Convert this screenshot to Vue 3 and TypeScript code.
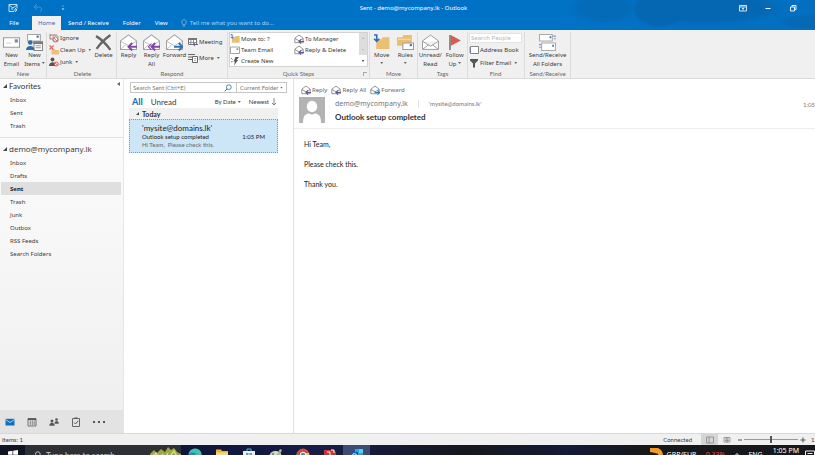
<script setup lang="ts">
import { ref } from 'vue'

interface QuickStep {
  icon: string
  label: string
}

const tabs: string[] = ['File', 'Home', 'Send / Receive', 'Folder', 'View']
const activeTab = ref<string>('Home')

const quickSteps: QuickStep[] = [
  { icon: 'move', label: 'Move to: ?' },
  { icon: 'reply-small', label: 'To Manager' },
  { icon: 'mail', label: 'Team Email' },
  { icon: 'reply-small', label: 'Reply & Delete' },
  { icon: 'bolt', label: 'Create New' },
]

const favorites: string[] = ['Inbox', 'Sent', 'Trash']
const folders: string[] = ['Inbox', 'Drafts', 'Sent', 'Trash', 'Junk', 'Outbox', 'RSS Feeds', 'Search Folders']
const activeFolder = ref<string>('Sent')

const modules: string[] = ['nav-mail', 'nav-calendar', 'nav-people', 'nav-tasks', 'nav-more']
const moduleNames: string[] = ['Mail', 'Calendar', 'People', 'Tasks', 'More']
const apps: string[] = ['edge', 'explorer', 'store', 'paint', 'chrome', 'red', 'outlook']

const peopleQuery = ref<string>('')
const mailQuery = ref<string>('')
const scope = ref<string>('Current Folder')
const zoom = ref<number>(50)
</script>

<template>
  <div class="window">
    <svg class="sprite" aria-hidden="true">
      <symbol id="outlook-app" viewBox="0 0 10 10">
        <path d="M1 1.500h8v4M1 1.500v7h5M1 2l4 3 4-3M3 6h2M7 5l2 2-2 2M9 7H5.500" fill="none" stroke="#d9ecfa" stroke-width=".9" />
      </symbol>
      <symbol id="undo" viewBox="0 0 10 10">
        <path d="M4 1L1 4l3 2.500M1.500 4H6c3 0 3 4 1 5" fill="none" stroke="#3d98dc" />
      </symbol>
      <symbol id="qat-more" viewBox="0 0 10 10">
        <path d="M4 3h2M4 5.500h2L5 7z" fill="#8cc4ee" stroke="#8cc4ee" stroke-width=".6" />
      </symbol>
      <symbol id="bulb" viewBox="0 0 8 10">
        <path d="M2.600 6.500C.2 4.500 1 1 4 1s3.800 3.500 1.400 5.500v1H2.600zM2.800 9h2.400" fill="none" stroke="#a8d2f2" stroke-width=".8" />
      </symbol>
      <symbol id="ribbon-options" viewBox="0 0 10 10">
        <path d="M1.500 2.500h7v5.500h-7zM1.500 4h7M5 7.500V5M3.900 6L5 4.900 6.100 6" fill="none" stroke="#e4f1fb" stroke-width=".9" />
      </symbol>
      <symbol id="minimize" viewBox="0 0 10 10"><path d="M2.500 5.500h5" stroke="#fff" /></symbol>
      <symbol id="restore" viewBox="0 0 10 10">
        <path d="M2.500 4h4v4h-4zM4 4V2.500h4v4H6.500" fill="none" stroke="#fff" stroke-width=".9" />
      </symbol>
      <symbol id="close" viewBox="0 0 10 10"><path d="M2 2l6 6M8 2L2 8" stroke="#fff" /></symbol>

      <symbol id="mail-large" viewBox="0 0 16 16">
        <path d="M.5 3.500h15v9H.5z" fill="#fff" stroke="#9b9b9b" />
        <path d="M11 5h3v3h-3z" fill="#7c8b9d" />
        <path d="M3 8.500h5" stroke="#cfd5db" />
      </symbol>
      <symbol id="new-items" viewBox="0 0 16 16">
        <path d="M1.500.5h12v6h-12z" fill="#fff" stroke="#a5a5a5" />
        <path d="M10 1.500h2v2h-2z" fill="#4d6d92" />
        <path d="M7.500 7.500h8v8h-8z" fill="#fff" stroke="#888" />
        <path d="M7 7h9v2.500H7z" fill="#7a7a7a" />
        <path d="M9 11h5M9 13h5" stroke="#999" />
        <circle cx="4" cy="8" r="2.200" fill="#2f6cab" />
        <path d="M0 15c0-5 8-5 8 0z" fill="#2f6cab" />
      </symbol>
      <symbol id="ignore" viewBox="0 0 10 10">
        <path d="M1 2h7M1 1v5h3" fill="none" stroke="#a66a66" stroke-width=".9" />
        <path d="M4 3h5v5H4z" fill="#fff" stroke="#999" stroke-width=".8" />
        <circle cx="6.500" cy="6.500" r="2.500" fill="none" stroke="#c8625a" stroke-width=".9" />
        <path d="M4.800 4.800l3.500 3.500" stroke="#c8625a" stroke-width=".8" />
      </symbol>
      <symbol id="clean" viewBox="0 0 10 10">
        <path d="M2.500 4h3l1 1H10v4.500H2.500z" fill="#ecc17a" />
        <path d="M.5.500l4 4M4.500.500l-4 4" stroke="#d8695c" stroke-width="1.100" />
      </symbol>
      <symbol id="junk" viewBox="0 0 10 10">
        <circle cx="3.500" cy="2.500" r="1.900" fill="#555" />
        <path d="M0 9c0-5 7-5 7 0z" fill="#555" />
        <circle cx="7.200" cy="7" r="2" fill="#fff" stroke="#c8483e" stroke-width=".9" />
        <path d="M5.800 5.600l2.800 2.800" stroke="#c8483e" stroke-width=".8" />
      </symbol>
      <symbol id="delete" viewBox="0 0 16 16">
        <path d="M1 2C6 5 11 10 14.500 15M14.500 1C9 5 5 9 1.500 14" fill="none" stroke="#666" stroke-width="2.200" />
      </symbol>
      <symbol id="reply" viewBox="0 0 16 16">
        <path d="M.5 6.500L8 .8l7.500 5.700v8H.5z" fill="#fff" stroke="#a2a2a2" />
        <path d="M.8 7L8 11l7.200-4M.8 14.300L5.500 10" fill="none" stroke="#b5b5b5" stroke-width=".8" />
        <path d="M8.500 12H16" stroke="#8146a4" stroke-width="1.800" />
        <path d="M11.500 8.500L8 12l3.500 3.500" fill="none" stroke="#8146a4" stroke-width="1.800" />
      </symbol>
      <symbol id="reply-all" viewBox="0 0 16 16">
        <path d="M.5 6.500L8 .8l7.500 5.700v8H.5z" fill="#fff" stroke="#a2a2a2" />
        <path d="M.8 7L8 11l7.200-4M.8 14.300L5 10" fill="none" stroke="#b5b5b5" stroke-width=".8" />
        <path d="M8.500 12H16M11.500 8.500L8 12l3.500 3.500" fill="none" stroke="#8146a4" stroke-width="1.800" />
        <path d="M8 9l-3 3 3 3" fill="none" stroke="#8146a4" />
      </symbol>
      <symbol id="forward" viewBox="0 0 16 16">
        <path d="M.5 6.500L8 .8l7.500 5.700v8H.5z" fill="#fff" stroke="#a2a2a2" />
        <path d="M.8 7L8 11l7.200-4M.8 14.300L5.500 10" fill="none" stroke="#b5b5b5" stroke-width=".8" />
        <path d="M7.500 12H15M12 8.500l3.500 3.500-3.500 3.500" fill="none" stroke="#2f74b8" stroke-width="1.800" />
      </symbol>
      <symbol id="meeting" viewBox="0 0 10 10">
        <path d="M.5 1.500h8v6h-8z" fill="#fff" stroke="#777" />
        <path d="M0 1h9v2H0zM2.500 3h.8v4.500h-.8zM5 3h.8v4.500H5zM1 5h7v.7H1z" fill="#777" />
        <path d="M5 7.500h5M7 5.800L5.300 7.500 7 9.200" fill="none" stroke="#7154a1" />
      </symbol>
      <symbol id="more" viewBox="0 0 10 10">
        <path d="M0 1.500h7M0 4h4M0 6.500h4" stroke="#666" />
        <path d="M4.500 3.500h5v6h-5z" fill="#fff" stroke="#666" />
        <path d="M6 5.500h2M6 7.500h2" stroke="#888" stroke-width=".7" />
      </symbol>
      <symbol id="move" viewBox="0 0 16 16">
        <path d="M3 5h5l1-2h6.500v11H3z" fill="#ebbf72" />
        <path d="M1 1h2.500v5M1 4.500L3.500 7 6 4.500" fill="none" stroke="#2f6cb4" stroke-width="1.500" />
      </symbol>
      <symbol id="rules" viewBox="0 0 16 16">
        <path d="M0 3h5l1-2h8v10H0z" fill="#ebbf72" />
        <path d="M5.500 8.500h10v6h-10z" fill="#fff" stroke="#9c9c9c" />
        <path d="M12 9.500h2v2h-2z" fill="#356ca8" />
        <path d="M1 5h12" stroke="#f7dfb2" />
      </symbol>
      <symbol id="mail" viewBox="0 0 10 10">
        <path d="M.5 2h9v6.500h-9z" fill="#fff" stroke="#999" stroke-width=".9" />
        <path d="M6.500 3.300h1.800V5H6.500z" fill="#888" />
      </symbol>
      <symbol id="reply-small" viewBox="0 0 10 10">
        <path d="M.8 4.200L5 1l4.200 3.200v4.500H.8zM1 4.500l4 2.400 4-2.400" fill="#fff" stroke="#888" stroke-width=".9" />
        <path d="M5 7.500h5M7 5.500l-2 2 2 2" fill="none" stroke="#5d5a9c" stroke-width="1.100" />
      </symbol>
      <symbol id="forward-small" viewBox="0 0 10 10">
        <path d="M.8 4.200L5 1l4.200 3.200v4.500H.8zM1 4.500l4 2.400 4-2.400" fill="#fff" stroke="#888" stroke-width=".9" />
        <path d="M4.500 7.500h5M7.500 5.500l2 2-2 2" fill="none" stroke="#2f80c2" stroke-width="1.100" />
      </symbol>
      <symbol id="bolt" viewBox="0 0 10 10">
        <path d="M5.500 1H9L6.500 4h1.600L4 9.500l1-4H3.500z" fill="#555" />
        <path d="M1 2l1.500 1.500M1 6l1.500-.5" stroke="#777" />
      </symbol>
      <symbol id="open-mail" viewBox="0 0 16 16">
        <path d="M.5 6.500L8 1l7.500 5.500v8H.5zM.8 7L8 11.500 15.200 7M.8 14.300L6 10.300M15.200 14.300L10 10.300" fill="#fff" stroke="#999" stroke-width=".9" />
      </symbol>
      <symbol id="flag" viewBox="0 0 16 16">
        <path d="M3 1h1.500v14H3z" fill="#777" />
        <path d="M4.500 1L14 6l-9.500 5z" fill="#d95d4e" />
      </symbol>
      <symbol id="book" viewBox="0 0 10 10">
        <path d="M1.500 1.500h8v7h-8z" fill="#fff" stroke="#777" stroke-width=".9" />
        <path d="M0 3h2M0 5h2M0 7h2" stroke="#5a7fa7" stroke-width=".8" />
      </symbol>
      <symbol id="filter" viewBox="0 0 10 10"><path d="M1 1h8v1.500L6 5.500v4H4v-4L1 2.500z" fill="#555" /></symbol>
      <symbol id="send-receive" viewBox="0 0 16 16">
        <path d="M.5.500h12v6H.5zM2.500 8.500h13v7h-13z" fill="#fff" stroke="#aaa" />
        <path d="M10 2h1.500v2H10zM12.500 10H14v2h-1.500z" fill="#3b6ca4" />
        <path d="M13 2h3M14 4.500h2M0 10h2M0 12.500h2" stroke="#7f9fc0" />
      </symbol>

      <symbol id="search" viewBox="0 0 10 10">
        <circle cx="6" cy="4" r="3" fill="none" stroke="currentColor" />
        <path d="M3.800 6.200L.8 9.200" stroke="currentColor" stroke-width="1.200" />
      </symbol>
      <symbol id="nav-mail" viewBox="0 0 10 10">
        <path d="M.5 1.800h9v6.700h-9z" fill="#0d6fbd" />
        <path d="M.5 2.500L5 5.500l4.500-3" fill="none" stroke="#d8e9f5" stroke-width=".8" />
      </symbol>
      <symbol id="nav-calendar" viewBox="0 0 10 10">
        <path d="M1 1.500h8v7.500H1z" fill="#f1f1f1" stroke="#555" stroke-width=".8" />
        <path d="M1 1.500h8v1.700H1z" fill="#555" />
        <path d="M1.500 5h7M1.500 7h7M3.500 3.500v5M5.500 3.500v5M7.300 3.500v5" stroke="#777" stroke-width=".6" />
      </symbol>
      <symbol id="nav-people" viewBox="0 0 10 10">
        <circle cx="3" cy="4" r="1.500" fill="#555" />
        <circle cx="7.500" cy="2.500" r="1.300" fill="#555" />
        <path d="M.3 8.800c0-4 5.400-4 5.400 0zM5.500 6.800c0-3.700 4.300-3.700 4.300 0z" fill="#555" />
      </symbol>
      <symbol id="nav-tasks" viewBox="0 0 10 10">
        <path d="M1.500 1.500h7v8h-7z" fill="none" stroke="#666" />
        <path d="M3.500.500h3V2h-3z" fill="#555" />
        <path d="M3 5.500L4.500 7l2.700-3.200" fill="none" stroke="#555" />
      </symbol>
      <symbol id="nav-more" viewBox="0 0 12 12">
        <path d="M0 5h2v2H0zM5 5h2v2H5zM10 5h2v2h-2z" fill="#555" />
      </symbol>

      <symbol id="windows" viewBox="0 0 10 10"><path d="M0 1.400L4.500.8v4H0zM5.200.7L10 0v4.800H5.200zM0 5.400h4.500v4L0 8.800zM5.200 5.400H10V10l-4.800-.7z" fill="#fff" /></symbol>
      <symbol id="plants" viewBox="0 0 32 18">
        <path d="M0 18L1 8l4-4 3 3 4-4 4 3 3-5 3 3 3-2 3 4 4 2v10z" fill="#9aa943" />
        <path d="M3 11l4-4 4 5M13 8l3 4 3-5M22 9l3-4 3 6" fill="none" stroke="#e1d27b" stroke-width="1.500" />
        <circle cx="15" cy="12" r="2.600" fill="#28a696" />
        <circle cx="23" cy="13" r="2.400" fill="#45681e" />
      </symbol>
      <symbol id="edge" viewBox="0 0 14 14">
        <circle cx="7" cy="7" r="6.500" fill="#188dd0" />
        <path d="M.6 6C2-1 13-1 13.400 6c.2 3-4 3-5 2 1-3-4-5-7.800-2z" fill="#42c4a2" />
      </symbol>
      <symbol id="explorer" viewBox="0 0 14 14">
        <path d="M1 1.500h5l1 1.500h6v9H1z" fill="#eab13c" /><path d="M1 4.500h12V12H1z" fill="#ffd867" />
      </symbol>
      <symbol id="store" viewBox="0 0 14 14">
        <path d="M5 3V1h4v2" fill="none" stroke="#4bb4e8" /><path d="M1 3h12v10H1z" fill="#e8f0f5" /><path d="M4 5h2.500v2.500H4z" fill="#4a9ed8" /><path d="M7.500 5H10v2.500H7.500z" fill="#6fae45" />
      </symbol>
      <symbol id="paint" viewBox="0 0 14 14">
        <ellipse cx="6.500" cy="8" rx="6" ry="5" fill="#d8ddcf" /><path d="M7 8l4-7 2 1-3 7z" fill="#a9bb83" /><circle cx="4" cy="6" r="1.300" fill="#65a65d" />
      </symbol>
      <symbol id="chrome" viewBox="0 0 14 14">
        <circle cx="7" cy="7" r="6.500" fill="#d9463c" /><path d="M1 4l6 9.500C0 13 0 8 1 4z" fill="#38a254" /><path d="M13 5c1 5-2 8-6 8.500L10 5z" fill="#f2c53a" /><circle cx="7" cy="7" r="2.800" fill="#4386e8" stroke="#fff" />
      </symbol>
      <symbol id="red" viewBox="0 0 14 14">
        <path d="M1 2h9l3 2v9H1z" fill="#cf332f" /><path d="M4 4h3v4M8 2h3v3" fill="none" stroke="#fff" />
      </symbol>
      <symbol id="outlook" viewBox="0 0 14 14">
        <path d="M5 1h8v12H5z" fill="#2aa3e5" /><path d="M1 4h7v7H1z" fill="#0a61ad" /><path d="M9 1h4v4H9z" fill="#58cff4" /><circle cx="4.500" cy="7.500" r="1.900" fill="none" stroke="#fff" />
      </symbol>
      <symbol id="market" viewBox="0 0 14 14">
        <path d="M0 0h8c5 2 6 7 4 13C9 13 8 9 8 6L5 5 0 4z" fill="#f49b23" />
      </symbol>
    </svg>

    <header class="top">
      <div class="titlebar">
        <div class="quick">
          <button aria-label="Outlook"><svg class="s10"><use href="#outlook-app" /></svg></button>
          <button aria-label="Undo"><svg class="s10"><use href="#undo" /></svg></button>
          <button aria-label="Customize toolbar"><svg class="s10"><use href="#qat-more" /></svg></button>
        </div>
        <h1>Sent - demo@mycompany.lk - Outlook</h1>
        <div class="controls">
          <button aria-label="Ribbon options"><svg class="s10"><use href="#ribbon-options" /></svg></button>
          <button aria-label="Minimize"><svg class="s10"><use href="#minimize" /></svg></button>
          <button aria-label="Restore"><svg class="s10"><use href="#restore" /></svg></button>
          <button aria-label="Close"><svg class="s10"><use href="#close" /></svg></button>
        </div>
      </div>
      <nav class="tabs">
        <button v-for="tab in tabs" :key="tab" :class="{ active: tab === activeTab }" @click="activeTab = tab">{{ tab }}</button>
        <label class="tell"><svg class="s8"><use href="#bulb" /></svg><input aria-label="Tell me" placeholder="Tell me what you want to do..." /></label>
      </nav>
    </header>

    <section class="ribbon">
      <div class="group g-new">
        <div class="tools">
          <button class="big"><svg class="s16"><use href="#mail-large" /></svg><span>New<br />Email</span></button>
          <button class="big"><svg class="s16"><use href="#new-items" /></svg><span>New<br />Items <i class="caret" /></span></button>
        </div>
        <h2>New</h2>
      </div>
      <div class="group g-delete">
        <div class="tools">
          <div class="stack">
            <button class="small"><svg class="s10"><use href="#ignore" /></svg>Ignore</button>
            <button class="small"><svg class="s10"><use href="#clean" /></svg>Clean Up <i class="caret" /></button>
            <button class="small"><svg class="s10"><use href="#junk" /></svg>Junk <i class="caret" /></button>
          </div>
          <button class="big"><svg class="s16"><use href="#delete" /></svg><span>Delete</span></button>
        </div>
        <h2>Delete</h2>
      </div>
      <div class="group g-respond">
        <div class="tools">
          <button class="big"><svg class="s16"><use href="#reply" /></svg><span>Reply</span></button>
          <button class="big"><svg class="s16"><use href="#reply-all" /></svg><span>Reply<br />All</span></button>
          <button class="big"><svg class="s16"><use href="#forward" /></svg><span>Forward</span></button>
          <div class="stack pair">
            <button class="small"><svg class="s10"><use href="#meeting" /></svg>Meeting</button>
            <button class="small"><svg class="s10"><use href="#more" /></svg>More <i class="caret" /></button>
          </div>
        </div>
        <h2>Respond</h2>
      </div>
      <div class="group g-steps">
        <div class="gallery">
          <div class="steps">
            <button v-for="step in quickSteps" :key="step.label" class="small"><svg class="s10"><use :href="'#' + step.icon" /></svg>{{ step.label }}</button>
          </div>
          <div class="scroller"><i class="up" /><i class="down" /><i class="expand" /></div>
        </div>
        <h2>Quick Steps<i class="launcher" /></h2>
      </div>
      <div class="group g-move">
        <div class="tools">
          <button class="big"><svg class="s16"><use href="#move" /></svg><span>Move<br /><i class="caret" /></span></button>
          <button class="big"><svg class="s16"><use href="#rules" /></svg><span>Rules<br /><i class="caret" /></span></button>
        </div>
        <h2>Move</h2>
      </div>
      <div class="group g-tags">
        <div class="tools">
          <button class="big"><svg class="s16"><use href="#open-mail" /></svg><span>Unread/<br />Read</span></button>
          <button class="big"><svg class="s16"><use href="#flag" /></svg><span>Follow<br />Up <i class="caret" /></span></button>
        </div>
        <h2>Tags</h2>
      </div>
      <div class="group g-find">
        <div class="stack">
          <input v-model="peopleQuery" class="people" aria-label="Search People" placeholder="Search People" />
          <button class="small"><svg class="s10"><use href="#book" /></svg>Address Book</button>
          <button class="small"><svg class="s10"><use href="#filter" /></svg>Filter Email <i class="caret" /></button>
        </div>
        <h2>Find</h2>
      </div>
      <div class="group g-send">
        <div class="tools">
          <button class="big"><svg class="s16"><use href="#send-receive" /></svg><span>Send/Receive<br />All Folders</span></button>
        </div>
        <h2>Send/Receive</h2>
      </div>
    </section>

    <div class="main">
      <aside class="sidebar">
        <section class="tree">
          <h3><i class="tri" />Favorites<i class="collapse" /></h3>
          <ul>
            <li v-for="name in favorites" :key="name"><button>{{ name }}</button></li>
          </ul>
        </section>
        <section class="tree account">
          <h3><i class="tri" />demo@mycompany.lk</h3>
          <ul>
            <li v-for="name in folders" :key="name">
              <button :class="{ active: name === activeFolder }" @click="activeFolder = name">{{ name }}</button>
            </li>
          </ul>
        </section>
        <div class="modules">
          <button v-for="(icon, i) in modules" :key="icon" :aria-label="moduleNames[i]"><svg :class="icon === 'nav-more' ? 's12' : 's10'"><use :href="'#' + icon" /></svg></button>
        </div>
      </aside>

      <section class="list">
        <div class="finder">
          <label class="query"><input v-model="mailQuery" aria-label="Search mail" placeholder="Search Sent (Ctrl+E)" /><svg class="s8"><use href="#search" /></svg></label>
          <label class="scope">
            <select v-model="scope" aria-label="Search scope"><option>Current Folder</option></select>
            <i class="caret" />
          </label>
        </div>
        <div class="filters">
          <button class="all">All</button>
          <button class="unread">Unread</button>
          <button class="sort">By Date <i class="caret" /></button>
          <button class="order">Newest <svg class="s8" viewBox="0 0 8 8"><path d="M4 0v7M2 5l2 2 2-2" fill="none" stroke="#666" stroke-width=".8" /></svg></button>
        </div>
        <h4><i class="tri" />Today</h4>
        <article class="message">
          <div class="sender">'mysite@domains.lk'</div>
          <div class="line"><span>Outlook setup completed</span><time>1:05 PM</time></div>
          <p>Hi Team,&nbsp; Please check this.</p>
        </article>
      </section>

      <article class="reading">
        <header class="mail-head">
          <div class="actions">
            <button><svg class="s10"><use href="#reply-small" /></svg>Reply</button>
            <button><svg class="s10"><use href="#reply-small" /></svg>Reply All</button>
            <button><svg class="s10"><use href="#forward-small" /></svg>Forward</button>
          </div>
          <div class="who">
            <svg class="avatar" viewBox="0 0 26 26">
              <path d="M0 0h26v26H0z" fill="#b3b3b3" />
              <ellipse cx="13" cy="9.500" rx="5.200" ry="5.700" fill="#fff" />
              <path d="M4 26c0-7 2-9 6-9.500 2 1.300 4 1.300 6 0 4 .5 6 2.500 6 9.500z" fill="#fff" />
            </svg>
            <div class="names">
              <div class="from"><span>demo@mycompany.lk</span><span class="to">'mysite@domains.lk'</span></div>
              <h2>Outlook setup completed</h2>
            </div>
            <time>1:05</time>
          </div>
        </header>
        <div class="body">
          <p>Hi Team,</p>
          <p>Please check this.</p>
          <p>Thank you.</p>
        </div>
      </article>
    </div>

    <footer class="status">
      <span>Items: 1</span>
      <span class="connected">Connected</span>
      <button class="view on" aria-label="Normal view"><svg class="s8" viewBox="0 0 8 8"><path d="M.5 1h7v6h-7zM3 1v6" fill="none" stroke="#888" stroke-width=".8" /></svg></button>
      <button class="view" aria-label="Reading view"><svg class="s8" viewBox="0 0 8 8"><path d="M1 1.500h6v4.500H1zM4 1.500V7M2 3h4M2 4.500h4" fill="none" stroke="#888" stroke-width=".8" /></svg></button>
      <button class="step" aria-label="Zoom out"><svg class="s8" viewBox="0 0 8 8"><path d="M2 4h4" stroke="#555" /></svg></button>
      <input v-model.number="zoom" type="range" min="0" max="100" aria-label="Zoom" />
      <button class="step" aria-label="Zoom in"><svg class="s8" viewBox="0 0 8 8"><path d="M1.500 4h5M4 1.500v5" stroke="#555" /></svg></button>
      <span class="percent">1</span>
    </footer>

    <footer class="taskbar">
      <div class="task-inner">
        <button class="start" aria-label="Start"><svg class="s10"><use href="#windows" /></svg></button>
        <label class="task-search">
          <svg class="s8"><use href="#search" /></svg>
          <input aria-label="Search Windows" placeholder="Type here to search" />
          <svg class="plants"><use href="#plants" /></svg>
        </label>
        <button v-for="app in apps" :key="app" class="app" :class="{ open: app === 'outlook' }" :aria-label="app"><svg class="s14"><use :href="'#' + app" /></svg></button>
        <div class="tray">
          <svg class="s14"><use href="#market" /></svg>
          <span class="pair-name">GBP/EUR</span>
          <span class="loss">-0.33%</span>
          <svg class="s8 chev" viewBox="0 0 8 8"><path d="M2 4.500l2-2 2 2" fill="none" stroke="#fff" /></svg>
          <span class="lang">ENG</span>
          <time>1:05 PM</time>
          <svg class="s10" viewBox="0 0 10 10"><path d="M.5 1h9v7H6L4.500 9.500V8h-4zM2.500 3.500h5M2.500 5.500h5" fill="none" stroke="#eee" /></svg>
        </div>
      </div>
    </footer>
  </div>
</template>

<style>
body {
  margin: 0;
  overflow: hidden;
}
</style>

<style scoped>
.window {
  display: flex;
  flex-direction: column;
  height: 100vh;
  overflow: hidden;
  font: 6px/8px 'Noto Sans', 'Open Sans', sans-serif;
  color: #3a3a3a;
  background: #fff;
}
.window * { box-sizing: border-box; }
.sprite { position: absolute; width: 0; height: 0; }
button, input, select {
  min-width: 0;
  margin: 0;
  padding: 0;
  border: 0;
  border-radius: 0;
  outline: 0;
  background: none;
  color: inherit;
  font: inherit;
}
h1, h2, h3, h4, p, ul { margin: 0; padding: 0; font: inherit; list-style: none; }
svg { display: block; flex: none; }
.s8 { width: 8px; height: 8px; }
.s10 { width: 10px; height: 10px; }
.s12 { width: 12px; height: 12px; }
.s14 { width: 14px; height: 14px; }
.s16 { width: 17px; height: 17px; }
button { display: flex; align-items: center; white-space: nowrap; }
.caret {
  display: inline-block;
  width: 3px;
  height: 2px;
  background: #666;
  clip-path: polygon(0 0, 100% 0, 50% 100%);
  vertical-align: middle;
}

.top {
  flex: none;
  color: #fff;
  background:
    radial-gradient(ellipse 34px 16px at calc(100% - 212px) 8px, #046bb9 70%, transparent),
    radial-gradient(ellipse 28px 18px at calc(100% - 155px) 10px, #0566b1 80%, transparent),
    radial-gradient(ellipse 80px 18px at calc(100% - 110px) 8px, #0567b2 70%, transparent),
    radial-gradient(ellipse 30px 8px at calc(100% - 6px) 22px, #0569b6 70%, transparent),
    linear-gradient(90deg, #0072c6 68%, #046fc0);
}
.titlebar { display: grid; grid-template-columns: 1fr auto 1fr; align-items: center; height: 16px; }
.titlebar h1 { padding-left: 12px; }
.quick { display: flex; gap: 15px; padding-left: 8px; }
.controls { display: flex; justify-content: flex-end; gap: 15px; margin-right: -8px; }
.tabs { display: flex; height: 14px; }
.tabs button { justify-content: center; padding: 0 7px; }
.tabs button:first-child { width: 32px; padding: 0 4px 0 0; }
.tabs .active { width: 29px; padding: 0; background: #f1f1f1; color: #1c6fb5; }
.tell { display: flex; align-items: center; gap: 2px; margin-left: 5px; }
.tell input { width: 120px; }
.tell input::placeholder { color: #a8d2f2; opacity: 1; }

.ribbon {
  display: flex;
  flex: none;
  height: 49px;
  padding-top: 2px;
  background: #f0f0f0;
  border-bottom: 1px solid #dadada;
}
.group { display: flex; flex-direction: column; flex: none; border-right: 1px solid #dcdcdc; }
.group h2 { margin-top: auto; text-align: center; font: 6px/9px Lato, sans-serif; color: #666; white-space: nowrap; }
.tools { display: flex; height: 38px; }
.big { flex-direction: column; flex: 1 1 auto; align-items: center; padding-top: 2px; line-height: 9px; text-align: center; }
.big .caret { vertical-align: 2px; }
.small { gap: 1px; height: 12px; line-height: 10px; }
.small .caret { margin-left: 2px; }
.stack { display: flex; flex-direction: column; }
.g-new { width: 47px; }
.g-new .big { width: 23px; flex: none; }
.g-delete { width: 70px; padding-left: 2px; }
.g-delete .stack { width: 42px; }
.g-respond { width: 111px; }
.g-respond .big { width: 23px; flex: none; }
.pair { gap: 4px; padding: 4px 0 0 2px; }
.g-steps { width: 142px; padding: 0 1px; }
.gallery { display: flex; height: 35px; background: #fff; border: 1px solid #d2d2d2; }
.steps { display: grid; grid-template-columns: 64px 1fr; grid-auto-rows: 11px; flex: 1; }
.steps .small { height: 11px; gap: 1px; }
.scroller { display: flex; flex-direction: column; align-items: center; justify-content: space-between; width: 8px; padding: 4px 0; background: linear-gradient(#ddd 66%, #fff 66%); }
.up, .down, .expand { width: 3px; height: 2px; background: #bbb; clip-path: polygon(0 0, 100% 0, 50% 100%); }
.up { clip-path: polygon(0 100%, 100% 100%, 50% 0); }
.expand { background: #555; }
.g-steps h2 { position: relative; }
.launcher { position: absolute; right: 1px; bottom: 2px; width: 4px; height: 4px; border: 1px solid #aaa; border-right: 0; border-bottom: 0; }
.g-move { width: 48px; }
.g-move .big, .g-tags .big { width: 50%; }
.g-tags { width: 50px; }
.g-find { width: 57px; padding: 1px 2px 0 1px; }
.g-find .stack { gap: 1px; }
.people { height: 10px; padding: 0 1px; background: #fff; border: 1px solid #e2e2e2; }
.people::placeholder { color: #b5b5b5; opacity: 1; }
.g-send { width: 46px; }

.main { display: flex; flex: 1; min-height: 0; }
.sidebar { display: flex; flex-direction: column; flex: none; width: 123px; background: linear-gradient(#fdfdfd, #f8f8f8 40%, #eee); }
.tree { padding: 0 2px 0 1px; }
.tree h3 { display: flex; align-items: center; gap: 2px; height: 14px; padding-left: 2px; font: 8px/10px Lato, sans-serif; color: #333; }
.account h3 { font: 8px/10px 'Open Sans', sans-serif; }
.tri { width: 4px; height: 4px; background: #444; clip-path: polygon(100% 0, 100% 100%, 0 100%); }
.collapse { width: 3px; height: 4px; margin: 0 1px 4px auto; background: #666; clip-path: polygon(100% 0, 100% 100%, 0 50%); }
.tree button { width: 100%; height: 13px; padding-left: 9px; }
.tree .active { background: #dfdfdf; font-weight: 700; color: #222; }
.account { margin-top: 5px; padding-top: 4px; border-top: 1px solid #e1e1e1; }
.modules { display: flex; gap: 12px; height: 23px; margin-top: auto; padding-left: 5px; background: #e3e3e3; }

.list { flex: none; width: 171px; padding: 3px 6px 0 5px; border-left: 1px solid #e6e6e6; border-right: 1px solid #e1e1e1; font-family: Lato, sans-serif; }
.finder { display: flex; height: 11px; margin-left: 1px; border: 1px solid #c6c6c6; color: #777; }
.query { display: flex; align-items: center; flex: 1; padding: 0 4px 0 2px; color: #2b6ca8; }
.query input { flex: 1; }
.query input::placeholder { color: #777; opacity: 1; }
.scope { display: flex; align-items: center; width: 50px; padding: 0 3px; border-left: 1px solid #c6c6c6; }
.scope select { flex: 1; appearance: none; line-height: 8px; }
.filters { display: flex; align-items: center; height: 15px; margin-right: 9px; padding: 3px 0 0 3px; }
.all { margin-right: 8px; font-size: 9px; font-weight: 700; color: #0f6cb6; }
.unread { margin-right: auto; font-size: 8px; }
.sort, .order { gap: 2px; }
.sort { margin-right: 8px; }
.order { gap: 1px; }
.list h4 { display: flex; align-items: center; gap: 3px; height: 11px; margin-right: 9px; padding-left: 7px; background: #f0f0f0; font-size: 7px; font-weight: 700; color: #333; }
.list h4 .tri { width: 3px; height: 3px; }
.message { height: 34px; margin-right: 9px; padding: 4px 12px 0 12px; background: #cde6f7; border: 1px dotted #6f9cbb; white-space: nowrap; }
.sender { font-size: 8px; line-height: 9px; color: #222; }
.line { display: flex; justify-content: space-between; color: #222; }
.message p { color: #666; }

.reading { flex: 1; min-width: 0; overflow: hidden; }
.mail-head { height: 50px; padding: 5px 0 0 5px; border-bottom: 1px solid #ececec; }
.actions { display: flex; gap: 4px; height: 12px; padding-left: 2px; color: #666; }
.actions button { gap: 1px; }
.who { display: flex; padding-top: 1px; font-family: Lato, sans-serif; white-space: nowrap; }
.avatar { width: 26px; height: 26px; }
.names { flex: 1; padding-left: 10px; }
.from { display: flex; align-items: center; height: 14px; font: 7px/10px 'Noto Sans', sans-serif; color: #777; }
.to { margin-left: 10px; padding-left: 10px; border-left: 1px solid #e4e4e4; font: 6px/8px Lato, sans-serif; }
.names h2 { font-size: 8px; font-weight: 700; line-height: 13px; color: #333; }
.who > time { width: 12px; padding-top: 4px; color: #777; }
.body { padding: 10px; font: 7px/10px Lato, sans-serif; color: #222; }
.body p { padding-bottom: 10px; }

.status { display: flex; align-items: center; flex: none; height: 12px; padding-left: 2px; overflow: hidden; background: #f0f0f0; border-top: 1px solid #d5d9de; font-family: Lato, sans-serif; white-space: nowrap; }
.connected { margin-left: auto; margin-right: 9px; }
.view { justify-content: center; width: 17px; height: 11px; }
.view.on { background: #d5d5d5; }
.step { margin: 0 0 0 1px; }
.status input { appearance: none; width: 54px; height: 9px; background: linear-gradient(#999, #999) center / 100% 1px no-repeat; }
.status input::-webkit-slider-thumb { appearance: none; width: 2px; height: 7px; background: #555; }
.percent { width: 8px; padding-left: 4px; }

.taskbar { flex: none; height: 10px; overflow: hidden; color: #fff; background: linear-gradient(90deg, #0f1638 22%, #161d48 40%, #16171c 57%, #141a38 70%, #16181c 78%); }
.task-inner { display: flex; align-items: center; height: 20px; }
.start { justify-content: center; width: 25px; height: 20px; background: #121624; }
.task-search { display: flex; align-items: center; gap: 5px; width: 156px; height: 20px; padding-left: 8px; background: #2d3035; color: #ddd; }
.task-search input { flex: 1; font: 8px/12px Lato, sans-serif; }
.task-search input::placeholder { color: #ccc; opacity: 1; }
.plants { width: 32px; height: 18px; }
.app { justify-content: center; width: 27px; height: 20px; }
.app.open { background: #3c4c72; }
.tray { display: flex; align-items: center; margin-left: auto; font-size: 7px; white-space: nowrap; }
.pair-name { margin-left: 3px; }
.loss { margin-left: 7px; color: #ee4b4b; }
.chev { margin-left: 8px; }
.lang { margin-left: 7px; }
.tray time { margin: 0 6px 8px 10px; }
</style>
